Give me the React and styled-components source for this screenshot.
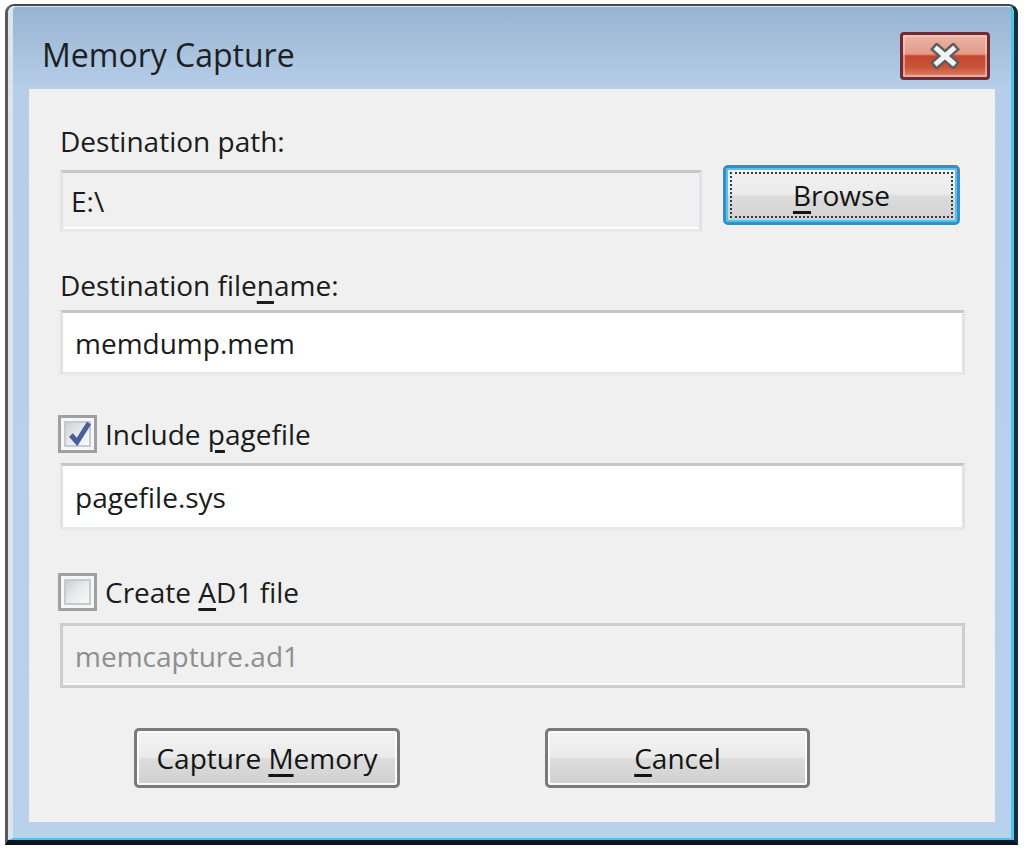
import React from 'react'
import styled, { createGlobalStyle } from 'styled-components'

const GlobalStyle = createGlobalStyle`
  html, body {
    margin: 0;
    padding: 0;
    background: #ffffff;
  }
  body {
    font-family: "Open Sans", "Noto Sans", sans-serif;
  }
`;

const CloseIcon = () => (
    <svg width="32" height="26" viewBox="0 0 32 26">
        <path d="M8 6 L24 20 M24 6 L8 20" stroke="#5e5e5e" strokeWidth="10" strokeLinecap="square" fill="none" />
        <path d="M8 6 L24 20 M24 6 L8 20" stroke="#f4f4f4" strokeWidth="5" strokeLinecap="square" fill="none" />
    </svg>
)

const CheckMark = () => (
    <svg width="32" height="32" viewBox="0 0 32 32">
        <path d="M9 17 L15 24 L27 5" stroke="#4a5d9c" strokeWidth="5" fill="none" strokeLinejoin="miter" />
    </svg>
)

const App = () => {
    return (
        <>
            <GlobalStyle />
            <Window>
                <Glass>
                    <TitleBar>
                        <Title>Memory Capture</Title>
                        <CloseButton aria-label="Close">
                            <CloseIcon />
                        </CloseButton>
                    </TitleBar>
                    <Content>
                        <Label $mt={34}>Destination path:</Label>
                        <PathRow>
                            <TextBox $readonly $w={642} $h={62} $mt={5} $pad={8}>E:\</TextBox>
                            <Button $w={237} $default>
                                <span><u>B</u>rowse</span>
                            </Button>
                        </PathRow>
                        <Label $mt={35}>Destination file<u>n</u>ame:</Label>
                        <TextBox $h={65} $mt={7}>memdump.mem</TextBox>
                        <CheckRow $mt={40}>
                            <CheckBox>
                                <CheckInner $checked>
                                    <CheckMark />
                                </CheckInner>
                            </CheckBox>
                            <CheckLabel>Include <u>p</u>agefile</CheckLabel>
                        </CheckRow>
                        <TextBox $h={67} $mt={10}>pagefile.sys</TextBox>
                        <CheckRow $mt={43}>
                            <CheckBox>
                                <CheckInner />
                            </CheckBox>
                            <CheckLabel>Create <u>A</u>D1 file</CheckLabel>
                        </CheckRow>
                        <TextBox $h={65} $mt={12} $disabled>memcapture.ad1</TextBox>
                        <ButtonRow>
                            <Button $w={266}>
                                <span>Capture <u>M</u>emory</span>
                            </Button>
                            <Button $w={265}>
                                <span><u>C</u>ancel</span>
                            </Button>
                        </ButtonRow>
                    </Content>
                </Glass>
            </Window>
        </>
    )
}

const Window = styled.div`
  box-sizing: border-box;
  margin: 4px 0 0 5px;
  width: 1013px;
  height: 841px;
  border-style: solid;
  border-width: 2px 4px 5px 3px;
  border-color: #3d4c56 #10303a #08181e #5a5a5a;
  border-radius: 9px 9px 0 0;
  overflow: hidden;
`;

const Glass = styled.div`
  box-sizing: border-box;
  height: 100%;
  display: flex;
  flex-direction: column;
  border-style: solid;
  border-width: 1px 3px 2px 5px;
  border-color: #dbe5f0 #46c6ea #46c6ea #dbe5f0;
  border-radius: 7px 7px 0 0;
  background: linear-gradient(#98b3d1, #b6cee8 82px, #b9d1ea);
  padding: 0 16px 16px;
`;

const TitleBar = styled.div`
  box-sizing: border-box;
  height: 82px;
  flex-shrink: 0;
  padding: 16px 5px 0 13px;
  display: flex;
  align-items: center;
  justify-content: space-between;
`;

const Title = styled.div`
  font-size: 32px;
  color: #1c1f24;
  white-space: nowrap;
  margin-top: -4px;
`;

const CloseButton = styled.div`
  box-sizing: border-box;
  width: 90px;
  height: 48px;
  border: 3px solid #6b2d36;
  border-radius: 4px;
  background: linear-gradient(#eab3a5 0%, #e59c8a 45%, #c5462c 50%, #c9553a 78%, #dd8870 100%);
  box-shadow: inset 0 0 0 2px rgba(255, 205, 195, 0.55);
  display: flex;
  align-items: center;
  justify-content: center;
`;

const Content = styled.div`
  flex: 1;
  background: #f0f0f0;
  padding: 0 30px 0 31px;
  display: flex;
  flex-direction: column;
  font-size: 28px;
  color: #1b1b1b;
  u {
    text-decoration-thickness: 3px;
    text-underline-offset: 5px;
  }
`;

const Label = styled.div`
  height: 36px;
  line-height: 36px;
  margin-top: ${p => p.$mt}px;
  white-space: nowrap;
`;

const PathRow = styled.div`
  display: flex;
  align-items: flex-start;
  gap: 21px;
  margin-top: 6px;
`;

const TextBox = styled.div`
  box-sizing: border-box;
  width: ${p => (p.$w ? `${p.$w}px` : 'auto')};
  height: ${p => p.$h}px;
  margin-top: ${p => p.$mt}px;
  padding-left: ${p => p.$pad || 12}px;
  display: flex;
  align-items: center;
  border-style: solid;
  border-width: 3px;
  border-color: ${p => (p.$disabled ? '#cdcdcd' : '#c4c6ca #e2e3ea #e3e9ef #e2e3ea')};
  background: ${p => (p.$readonly || p.$disabled ? '#f0f0f0' : '#ffffff')};
  box-shadow: ${p => (p.$readonly || p.$disabled ? 'inset 0 -2px 0 #fbfbfb' : 'none')};
  color: ${p => (p.$disabled ? '#8e8e8e' : '#1b1b1b')};
  white-space: nowrap;
`;

const Button = styled.div`
  position: relative;
  box-sizing: border-box;
  width: ${p => p.$w}px;
  height: 60px;
  flex-shrink: 0;
  display: flex;
  align-items: center;
  justify-content: center;
  border: 3px solid ${p => (p.$default ? '#3c8cc0' : '#7a7a7a')};
  border-radius: 5px;
  background: linear-gradient(#f3f3f3 0%, #ebebeb 48%, #dcdcdc 52%, #d0d0d0 100%);
  box-shadow: inset 0 0 0 2px ${p => (p.$default ? '#4cc6ee' : '#fbfbfb')};
  color: #141414;
  white-space: nowrap;
  &::after {
    content: '';
    display: ${p => (p.$default ? 'block' : 'none')};
    position: absolute;
    inset: 4px;
    border: 2px dotted #3a3a3a;
  }
`;

const CheckRow = styled.div`
  display: flex;
  align-items: center;
  gap: 8px;
  height: 38px;
  margin-top: ${p => p.$mt}px;
  margin-left: -2px;
`;

const CheckBox = styled.div`
  box-sizing: border-box;
  width: 39px;
  height: 38px;
  border: 3px solid #a0a0a0;
  padding: 3px;
  background: #f6f6f6;
`;

const CheckInner = styled.div`
  box-sizing: border-box;
  width: 100%;
  height: 100%;
  border: 2px solid #c7cbd1;
  background: linear-gradient(135deg, #cdd1d6 0%, #e6e8ea 45%, #fafafa 100%);
  display: flex;
  align-items: center;
  justify-content: center;
  overflow: visible;
  svg {
    flex-shrink: 0;
  }
`;

const CheckLabel = styled.div`
  line-height: 36px;
  white-space: nowrap;
`;

const ButtonRow = styled.div`
  display: flex;
  gap: 145px;
  margin-top: 40px;
  padding-left: 74px;
`;

export default App
